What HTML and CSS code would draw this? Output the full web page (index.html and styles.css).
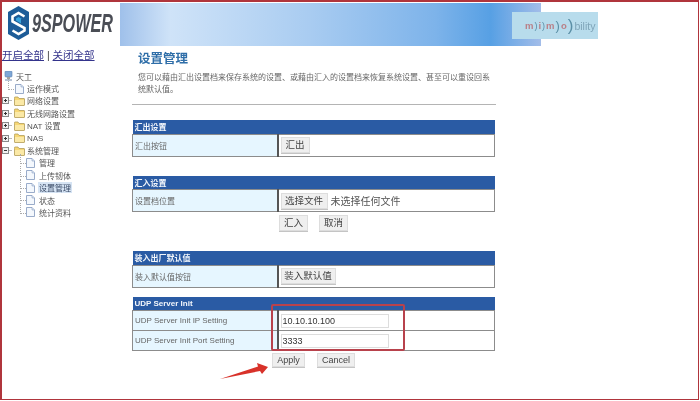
FILE: index.html
```html
<!DOCTYPE html>
<html lang="zh">
<head>
<meta charset="utf-8">
<title>设置管理</title>
<link rel="stylesheet" href="styles.css">
</head>
<body>
<svg class="defs" width="0" height="0" aria-hidden="true">
  <symbol id="folder" viewBox="0 0 11 10">
    <path d="M.5 2.5V1.5Q.5 1 1 1H4L5 2.5H10Q10.5 2.5 10.5 3V9Q10.5 9.5 10 9.5H1Q.5 9.5 .5 9Z" fill="#f7d774" stroke="#a8924e" stroke-width=".7"/>
    <path d="M1 4H10V9H1Z" fill="#fbe9a6"/>
  </symbol>
  <symbol id="page" viewBox="0 0 9 10">
    <path d="M.5 .5H6L8.5 3V9.5H.5Z" fill="#f4f8fd" stroke="#8ea3c4" stroke-width=".9"/>
    <path d="M6 .5V3H8.5" fill="#d6e2f2" stroke="#8ea3c4" stroke-width=".6"/>
  </symbol>
  <symbol id="plus" viewBox="0 0 7 7">
    <rect x=".5" y=".5" width="6" height="6" fill="#f1f1f1" stroke="#8a8a8a"/>
    <path d="M2 3.5H5M3.5 2V5" stroke="#333"/>
  </symbol>
  <symbol id="minus" viewBox="0 0 7 7">
    <rect x=".5" y=".5" width="6" height="6" fill="#f1f1f1" stroke="#8a8a8a"/>
    <path d="M2 3.5H5" stroke="#333"/>
  </symbol>
</svg>

<div class="frame">
  <aside class="side">
    <svg class="logo" width="180" height="38" viewBox="0 0 180 38">
      <path d="M18.500 3L29 9V31L18.500 37L8 31V9Z" fill="#1d5c98"/>
      <path d="M24.500 13.500L18.500 10L12.500 13.500V18.500L24.500 25V27.500L18.500 31L12.500 27.500" fill="none" stroke="#fff" stroke-width="2.600"/>
      <path d="M22 16L18.500 14L16 15.500V17.500L21 20.500V16Z" fill="#38a3dc"/>
      <text class="logo-text" x="32" y="29" textLength="81" lengthAdjust="spacingAndGlyphs">9SPOWER</text>
    </svg>
    <p class="toggle"><a href="#a">开启全部</a> | <a href="#b">关闭全部</a></p>
    <ul class="tree">
      <li class="node root">
        <svg class="computer" width="9" height="11" viewBox="0 0 9 11"><rect x="1" y="0" width="7" height="6" rx="1" fill="#7fa8d8" stroke="#5a7fae" stroke-width=".6"/><rect x="3" y="6" width="3" height="2" fill="#a3a3a3"/><rect x="1" y="8" width="7" height="2" fill="#b8c4d6"/></svg>
        <span>天工</span>
      </li>
      <li class="node lvl1"><span class="branch"></span><svg class="ico" width="9" height="10"><use href="#page"/></svg><span>运作模式</span></li>
      <li class="node lvl1"><svg class="exp" width="7" height="7"><use href="#plus"/></svg><span class="dash"></span><svg class="fold" width="11" height="10"><use href="#folder"/></svg><span>网络设置</span></li>
      <li class="node lvl1"><svg class="exp" width="7" height="7"><use href="#plus"/></svg><span class="dash"></span><svg class="fold" width="11" height="10"><use href="#folder"/></svg><span>无线网路设置</span></li>
      <li class="node lvl1"><svg class="exp" width="7" height="7"><use href="#plus"/></svg><span class="dash"></span><svg class="fold" width="11" height="10"><use href="#folder"/></svg><span>NAT 设置</span></li>
      <li class="node lvl1"><svg class="exp" width="7" height="7"><use href="#plus"/></svg><span class="dash"></span><svg class="fold" width="11" height="10"><use href="#folder"/></svg><span>NAS</span></li>
      <li class="node lvl1"><svg class="exp" width="7" height="7"><use href="#minus"/></svg><span class="dash"></span><svg class="fold" width="11" height="10"><use href="#folder"/></svg><span>系统管理</span></li>
      <li class="node lvl2"><span class="branch"></span><svg class="ico" width="9" height="10"><use href="#page"/></svg><span>管理</span></li>
      <li class="node lvl2"><span class="branch"></span><svg class="ico" width="9" height="10"><use href="#page"/></svg><span>上传韧体</span></li>
      <li class="node lvl2"><span class="branch"></span><svg class="ico" width="9" height="10"><use href="#page"/></svg><span class="selected">设置管理</span></li>
      <li class="node lvl2"><span class="branch"></span><svg class="ico" width="9" height="10"><use href="#page"/></svg><span>状态</span></li>
      <li class="node lvl2"><span class="branch last"></span><svg class="ico" width="9" height="10"><use href="#page"/></svg><span>统计资料</span></li>
    </ul>
  </aside>

  <main class="main">
    <header class="banner">
      <div class="brand">
        <span class="m1">m</span><span class="arc">)</span><span class="m1">i</span><span class="arc">)</span><span class="m1">m</span><span class="arc big">)</span><span class="m1">o</span><span class="arc bigger">)</span><span class="bility">bility</span>
      </div>
    </header>

    <section class="content">
      <h1 class="title">设置管理</h1>
      <p class="intro">您可以藉由汇出设置档来保存系统的设置、或藉由汇入的设置档来恢复系统设置、甚至可以重设回系统默认值。</p>
      <hr class="rule">

      <table class="panel first">
        <colgroup><col class="col-a"><col></colgroup>
        <tr><th colspan="2">汇出设置</th></tr>
        <tr class="r21"><td class="label">汇出按钮</td><td class="value"><button class="btn w29" type="button">汇出</button></td></tr>
      </table>

      <table class="panel second">
        <colgroup><col class="col-a"><col></colgroup>
        <tr><th colspan="2">汇入设置</th></tr>
        <tr class="r21"><td class="label">设置档位置</td><td class="value"><button class="btn w47" type="button">选择文件</button><span class="nofile">未选择任何文件</span></td></tr>
      </table>
      <div class="actions">
        <button class="btn w29" type="button">汇入</button>
        <button class="btn w29" type="button">取消</button>
      </div>

      <table class="panel third">
        <colgroup><col class="col-a"><col></colgroup>
        <tr><th colspan="2">装入出厂默认值</th></tr>
        <tr class="r21"><td class="label">装入默认值按钮</td><td class="value"><button class="btn w55" type="button">装入默认值</button></td></tr>
      </table>

      <table class="panel fourth">
        <colgroup><col class="col-a"><col></colgroup>
        <tr><th colspan="2">UDP Server Init</th></tr>
        <tr class="r20"><td class="label">UDP Server Init IP Setting</td><td class="value"><input class="field" type="text" value="10.10.10.100"></td></tr>
        <tr class="r20"><td class="label">UDP Server Init Port Setting</td><td class="value"><input class="field" type="text" value="3333"></td></tr>
      </table>
      <div class="actions apply">
        <button class="btn2 w33" type="button">Apply</button>
        <button class="btn2 w38" type="button">Cancel</button>
      </div>
    </section>
  </main>

  <div class="highlight"></div>
  <svg class="arrow" width="50" height="20" viewBox="0 0 50 20"><path d="M0 18L38 5.500L37 2L48 6L42 13L40 10Z" fill="#d8322a"/></svg>
</div>
</body>
</html>
```
FILE: styles.css
```css
* { box-sizing: border-box; }
html, body { margin: 0; padding: 0; background: #fff; }
body { width: 700px; height: 401px; overflow: hidden; font-family: "Liberation Sans", "Noto Sans CJK SC", sans-serif; }
.defs { position: absolute; }
.frame {
  position: relative;
  width: 699px; height: 400px;
  border: 2px solid #b0353c;
  border-width: 2px 1px 1px 2px;
  display: flex;
  filter: blur(.35px);
  background: #fff;
}
.side { width: 118px; flex: none; }
.logo { display: block; margin-top: 1px; margin-left: -2px; }
.logo-text { font: italic bold 26px "Liberation Sans", sans-serif; fill: #4a4d55; }
.toggle { margin: 7px 0 0; font-size: 10.5px; line-height: 14px; color: #444; white-space: nowrap; }
.toggle a { color: #34348c; text-decoration: underline; }
.tree { list-style: none; margin: 8px 0 0; padding: 0; font-size: 8px; color: #555; }
.node { display: flex; align-items: center; height: 12.4px; white-space: nowrap; position: relative; }
.root { padding-left: 2px; }
.root span { margin-left: 3px; }
.lvl1 .ico { margin-left: 13px; margin-right: 3px; }
.lvl1 .fold { margin-right: 2px; }
.exp { flex: none; }
.dash { width: 3px; height: 1px; margin-right: 2px; background: #bbb; }
.lvl2 { padding-left: 24px; }
.lvl2 .ico { margin-right: 4px; }
.branch { position: absolute; top: -3px; bottom: 5px; width: 6px; border-left: 1px dotted #aaa; border-bottom: 1px dotted #aaa; }
.lvl1 .branch { left: 6px; }
.lvl2 .branch { left: 18px; }
.selected { background: #d6e4f4; padding: 0 1px; margin-left: -1px; color: #3a4a66; }

.main { flex: 1; min-width: 0; }
.banner {
  width: 421px; height: 43px; margin-top: 1px;
  background: linear-gradient(90deg, #9fc0ea 0%, #cfe3f8 12%, #a9ccf1 45%, #7db3ea 75%, #57a0e4 88%, #a3bde9 100%);
  position: relative;
}
.brand {
  position: absolute; left: 392px; top: 9px;
  width: 86px; height: 27px; padding-left: 13px;
  background: #b8dcec;
  display: flex; align-items: center;
  font-size: 9px; color: #c08a90; white-space: nowrap;
}
.m1 { font-weight: bold; font-size: 9.5px; color: #b98088; }
.arc { color: #5a8fa6; margin: 0 1px; }
.big { font-size: 13px; }
.bigger { font-size: 17px; }
.bility { color: #7fa4b8; font-size: 10.5px; }

.content { padding-left: 12px; width: 375px; }
.title { margin: 4px 0 0 6px; font-size: 12.5px; line-height: 18px; font-weight: bold; color: #2f6ea8; }
.intro { margin: 4px 0 0 6px; width: 358px; font-size: 8px; line-height: 12px; color: #666; }
.rule { margin: 8px 0 0; width: 364px; height: 1px; border: 0; background: #b4b4b4; }
.panel { border-collapse: collapse; width: 363px; table-layout: fixed; font-size: 8px; }
.col-a { width: 145px; }
.panel th {
  height: 14px; padding: 0 0 0 2px; text-align: left;
  background: #2a5ba4; color: #f2f6fb; font-weight: bold; font-size: 8px;
}
.panel td { padding: 0; border: 1px solid #8c8c8c; }
.panel td.label { background: #e6f6ff; color: #666; padding-left: 2px; border-right: 2px solid #555; }
.panel td.value { background: #fff; padding-left: 2px; }
.r21 { height: 22px; }
.r20 { height: 20px; }
.first { margin-top: 15px; }
.second { margin-top: 19px; }
.third { margin-top: 1px; }
.fourth { margin-top: 9px; }
.btn, .btn2 {
  display: inline-block; height: 16px; padding: 0; margin: 0;
  border: 1px solid #ddd; background: #efefef; color: #444;
  font-family: "Liberation Sans", "Noto Sans CJK SC", sans-serif;
  font-size: 9.5px; line-height: 14px; vertical-align: middle;
  box-shadow: 0 1px 0 #c4c4c4;
}
.btn2 { height: 14px; line-height: 12px; font-size: 9px; }
.w29 { width: 29px; }
.w47 { width: 47px; }
.w55 { width: 55px; }
.w33 { width: 33px; }
.w38 { width: 38px; }
.nofile { margin-left: 3px; font-size: 10px; color: #555; vertical-align: middle; }
.actions { display: flex; gap: 11px; padding-left: 147px; height: 38px; padding-top: 3px; align-items: flex-start; }
.apply { padding-left: 140px; gap: 12px; padding-top: 2px; }
.field {
  display: block; width: 108px; height: 14px; padding: 0 0 0 1px; margin: 0;
  border: 1px solid #ddd; background: #fff; color: #333;
  font: 9px "Liberation Sans", sans-serif;
}
.highlight {
  position: absolute; left: 269px; top: 302px;
  width: 134px; height: 47px;
  border: 2px solid #b8424c; border-radius: 2px;
}
.arrow { position: absolute; left: 218px; top: 359px; }
```
